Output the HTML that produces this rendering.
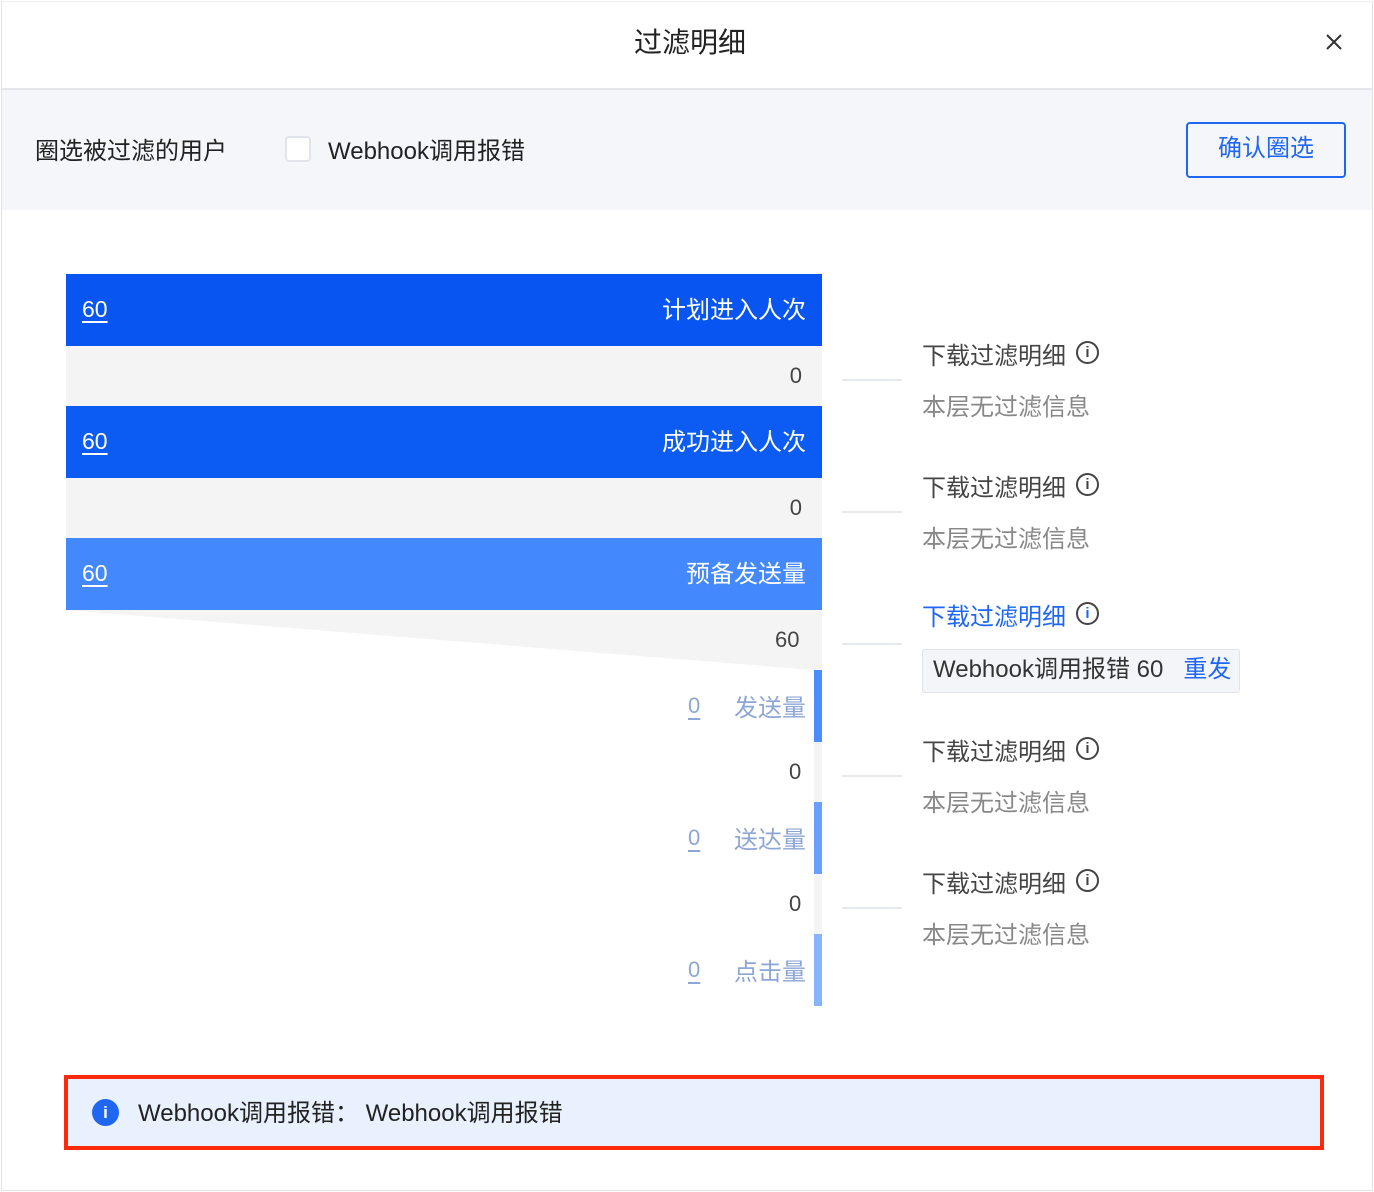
<!DOCTYPE html>
<html><head><meta charset="utf-8"><style>
*{margin:0;padding:0;box-sizing:border-box}
body{width:1374px;height:1192px;background:#fff;font-family:"Liberation Sans","Noto Sans CJK SC",sans-serif;position:relative;overflow:hidden;color:#222}
.a{position:absolute;white-space:nowrap}
.frame{position:absolute;left:1px;top:1px;width:1372px;height:1190px;border:1px solid #e2e2e2;border-top-color:#eee}
.bar{position:absolute;left:66px;width:756px;height:72px;color:#fff;font-size:24px;white-space:nowrap}
.bar .n{position:absolute;left:16px;top:22px;text-decoration:underline;text-underline-offset:4px;font-size:23px}
.bar .t{position:absolute;right:16px;top:16px}
.g{position:absolute;left:66px;width:756px;height:60px;background:#f4f4f4;font-size:22px;color:#444}
.g span{position:absolute;right:20px;top:17px}
.sm{position:absolute;left:814px;width:8px;height:72px}
.sl{position:absolute;left:814px;width:8px;height:60px;background:#f4f4f4}
.sg{position:absolute;font-size:24px;color:#8ea6d6;white-space:nowrap}
.sg .z{position:absolute;left:688px;top:1px;font-size:22px;text-decoration:underline;text-underline-offset:5px}
.sg .w{position:absolute;left:734px;top:-4px}
.ln{position:absolute;left:842px;width:60px;height:2px;background:#e6e9f0}
.h{position:absolute;left:922px;font-size:24px;color:#444;white-space:nowrap}
.s{position:absolute;left:922px;font-size:24px;color:#888;white-space:nowrap}
.ic{display:inline-block;width:23px;height:23px;border:2px solid #444;border-radius:50%;vertical-align:7px;margin-left:10px;position:relative;font-size:15px;text-align:center;line-height:19px;font-weight:bold}
</style></head><body>
<div class="frame"></div>
<div class="a" style="left:634px;top:21px;font-size:28px;color:#222">过滤明细</div>
<svg class="a" style="left:1325px;top:33px" width="18" height="18"><path d="M2 2L16 16M16 2L2 16" stroke="#333" stroke-width="2"/></svg>
<div class="a" style="left:2px;top:88px;width:1370px;height:2px;background:#e4e6eb"></div>
<div class="a" style="left:2px;top:90px;width:1370px;height:120px;background:#f5f6f9"></div>
<div class="a" style="left:35px;top:131px;font-size:24px">圈选被过滤的用户</div>
<div class="a" style="left:285px;top:136px;width:26px;height:26px;border:2px solid #e2e4ec;border-radius:4px;background:#fff"></div>
<div class="a" style="left:328px;top:131px;font-size:24px">Webhook调用报错</div>
<div class="a" style="left:1186px;top:122px;width:160px;height:56px;border:2px solid #1f67f2;border-radius:4px;color:#1f67f2;font-size:24px;text-align:center;line-height:50px">确认圈选</div>

<div class="bar" style="top:274px;background:#0855f1"><span class="n">60</span><span class="t">计划进入人次</span></div>
<div class="g" style="top:346px"><span>0</span></div>
<div class="bar" style="top:406px;background:#0c5cf3"><span class="n">60</span><span class="t">成功进入人次</span></div>
<div class="g" style="top:478px"><span>0</span></div>
<div class="bar" style="top:538px;background:#4388fd"><span class="n">60</span><span class="t">预备发送量</span></div>
<svg class="a" style="left:0;top:610px" width="830" height="62"><polygon points="66,0 822,0 822,60 814,60" fill="#f4f4f4"/></svg>
<div class="a" style="left:775px;top:627px;font-size:22px;color:#444">60</div>
<div class="sm" style="top:670px;background:#4c8cfd"></div>
<div class="sl" style="top:742px"></div>
<div class="sm" style="top:802px;background:#6aa0fd"></div>
<div class="sl" style="top:874px"></div>
<div class="sm" style="top:934px;background:#88b4fd"></div>
<div class="sg" style="top:692px;left:0"><span class="z">0</span><span class="w">发送量</span></div>
<div class="sg" style="top:824px;left:0"><span class="z">0</span><span class="w">送达量</span></div>
<div class="sg" style="top:956px;left:0"><span class="z">0</span><span class="w">点击量</span></div>
<div class="a" style="left:789px;top:759px;font-size:22px;color:#444">0</div>
<div class="a" style="left:789px;top:891px;font-size:22px;color:#444">0</div>

<div class="ln" style="top:379px"></div>
<div class="h" style="top:336px">下载过滤明细<span class="ic">i</span></div>
<div class="s" style="top:387px">本层无过滤信息</div>
<div class="ln" style="top:511px"></div>
<div class="h" style="top:468px">下载过滤明细<span class="ic">i</span></div>
<div class="s" style="top:519px">本层无过滤信息</div>
<div class="ln" style="top:643px"></div>
<div class="h" style="top:597px;color:#1f67f2">下载过滤明细<span class="ic">i</span></div>
<div class="a" style="left:922px;top:649px;width:318px;height:44px;background:#f4f5f8;border:1px solid #e0e3ea;border-radius:3px;font-size:24px;color:#333;line-height:40px;padding-left:10px">Webhook调用报错 60<span style="color:#1f67f2;margin-left:20px">重发</span></div>
<div class="ln" style="top:775px"></div>
<div class="h" style="top:732px">下载过滤明细<span class="ic">i</span></div>
<div class="s" style="top:783px">本层无过滤信息</div>
<div class="ln" style="top:907px"></div>
<div class="h" style="top:864px">下载过滤明细<span class="ic">i</span></div>
<div class="s" style="top:915px">本层无过滤信息</div>

<div class="a" style="left:64px;top:1075px;width:1260px;height:75px;border:4px solid #fb2a0c;background:#e8f1fd"></div>
<div class="a" style="left:92px;top:1099px;width:27px;height:27px;border-radius:50%;background:#1f67f2;color:#fff;font-size:17px;font-weight:bold;text-align:center;line-height:27px">i</div>
<div class="a" style="left:138px;top:1093px;font-size:24px;color:#222">Webhook调用报错：&nbsp;Webhook调用报错</div>
</body></html>
